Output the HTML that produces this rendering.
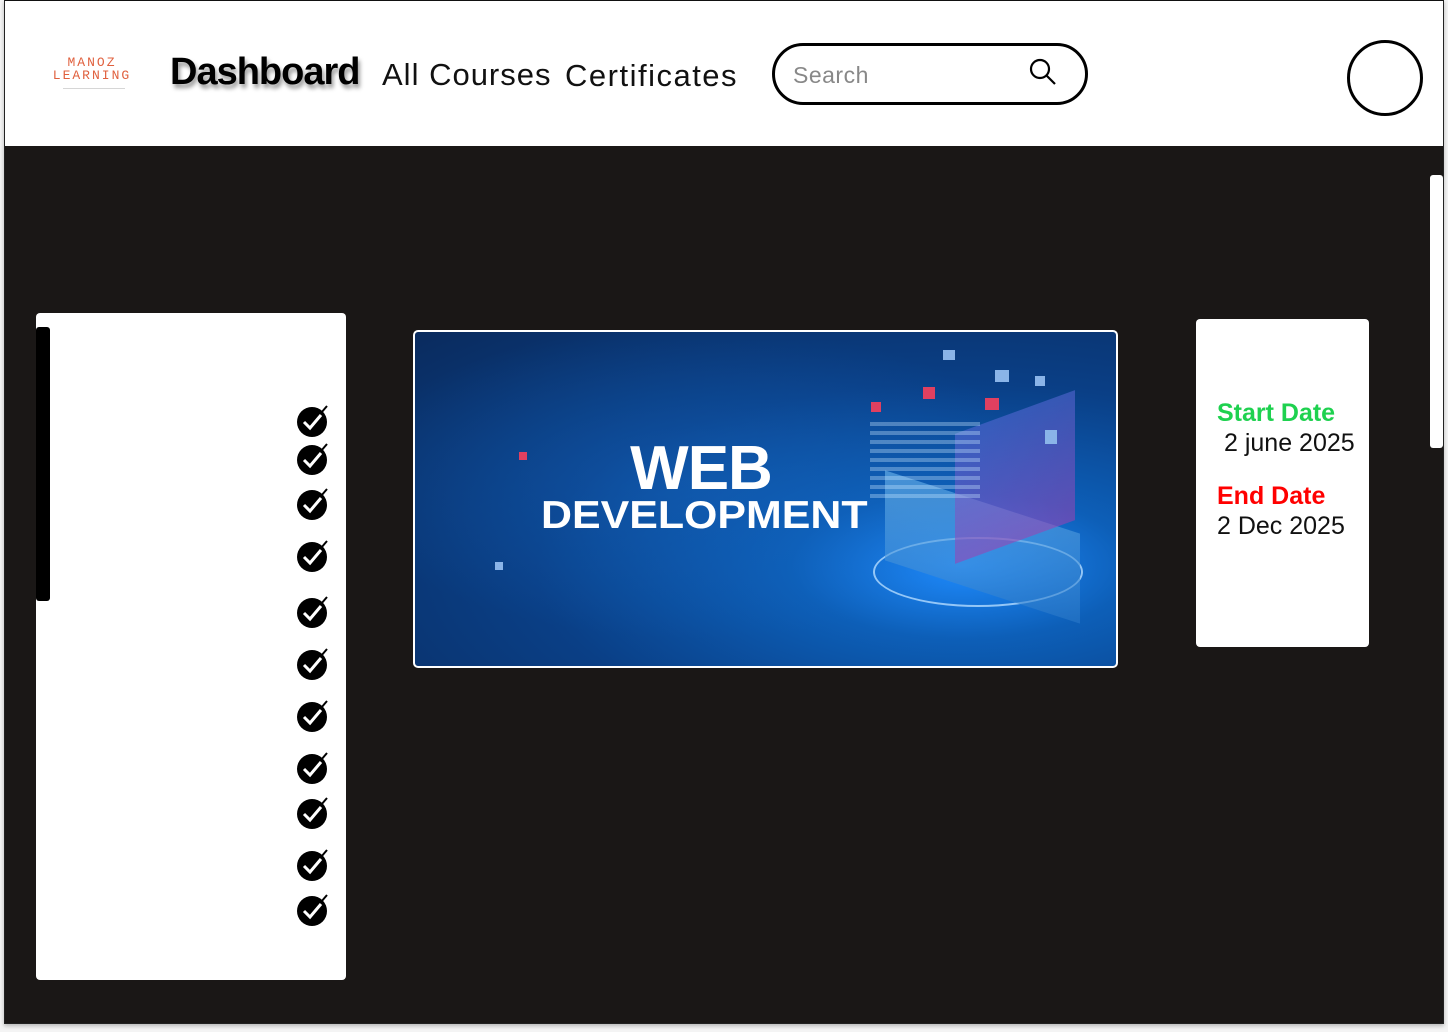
<!DOCTYPE html>
<html><head><meta charset="utf-8"><style>
*{margin:0;padding:0;box-sizing:border-box}
body{width:1448px;height:1032px;background:#f4f4f4;position:relative;overflow:hidden;font-family:"Liberation Sans",sans-serif}
.frame{position:absolute;left:4px;top:0;width:1440px;height:1024px;border:1px solid #222;border-top:1px solid #111;background:#1a1716;box-shadow:0 2px 4px rgba(0,0,0,.25)}
.hdr{position:absolute;left:0;top:0;width:1438px;height:145px;background:#fff}
.abs{position:absolute}
.card{background:#fff;border-radius:4px}
.chk{position:absolute;left:296px;width:32px;height:32px}
</style></head><body>
<div class="frame">
 <div class="hdr">
  <div class="abs" style="left:44px;top:55px;width:86px;text-align:center;color:#e0603e;font-family:'Liberation Mono',monospace;font-size:13px;line-height:13px;letter-spacing:2px">MANOZ<br>LEARNING</div>
  <div class="abs" style="left:58px;top:87px;width:62px;height:1px;background:#bbb;opacity:.6"></div>
  <div class="abs" style="left:165px;top:50px;font-size:38px;font-weight:bold;letter-spacing:-1px;color:#000;text-shadow:2px 4px 4px rgba(0,0,0,.4)">Dashboard</div>
  <div class="abs" style="left:377px;top:56px;font-size:31px;color:#111;letter-spacing:1px">All Courses</div>
  <div class="abs" style="left:560px;top:57px;font-size:31px;color:#111;letter-spacing:1.5px">Certificates</div>
  <div class="abs" style="left:767px;top:42px;width:316px;height:62px;border:3px solid #000;border-radius:31px"></div>
  <div class="abs" style="left:788px;top:61px;font-size:23px;color:#888;letter-spacing:.5px">Search</div>
  <svg class="abs" style="left:1023px;top:56px" width="30" height="30" viewBox="0 0 30 30"><circle cx="12" cy="12" r="9" fill="none" stroke="#000" stroke-width="2.2"/><line x1="18.5" y1="18.5" x2="27" y2="27" stroke="#000" stroke-width="2.2"/></svg>
  <div class="abs" style="left:1342px;top:39px;width:76px;height:76px;border:3px solid #000;border-radius:50%"></div>
 </div>
 <div class="abs" style="left:1425px;top:174px;width:13px;height:273px;background:#fff;border-radius:3px"></div>

 <div class="abs card" style="left:31px;top:312px;width:310px;height:667px"></div>
 <div class="abs" style="left:31px;top:326px;width:14px;height:274px;background:#000;border-radius:3px"></div>

 <div class="abs" style="left:408px;top:329px;width:705px;height:338px;border:2px solid #fff;border-radius:5px;overflow:hidden;background:radial-gradient(ellipse at 78% 70%,#1f8cff 0%,#0d5fb8 22%,#0a3f86 55%,#0a2b5e 100%)">
   <div class="abs" style="left:0;top:0;width:100%;height:100%;background:radial-gradient(ellipse at 40% 45%,rgba(20,100,190,.5),rgba(0,0,0,0) 60%)"></div>
   <div class="abs" style="left:458px;top:205px;width:210px;height:70px;border:2px solid rgba(180,220,255,.8);border-radius:50%"></div>
   <div class="abs" style="left:470px;top:170px;width:195px;height:90px;background:linear-gradient(160deg,#6fb8ee,#2a78c8);transform:skewY(18deg);opacity:.6"></div>
   <div class="abs" style="left:540px;top:80px;width:120px;height:130px;background:linear-gradient(180deg,#5a6ad8,#a03fb0);transform:skewY(-20deg);opacity:.55"></div>
   <div class="abs" style="left:455px;top:90px;width:110px;height:80px;background:repeating-linear-gradient(180deg,rgba(200,230,255,.7) 0 4px,rgba(0,0,0,0) 4px 9px);opacity:.5"></div>
   <div class="abs" style="left:528px;top:18px;width:12px;height:10px;background:#8ab4e8"></div>
   <div class="abs" style="left:580px;top:38px;width:14px;height:12px;background:#8ab4e8"></div>
   <div class="abs" style="left:620px;top:44px;width:10px;height:10px;background:#8ab4e8"></div>
   <div class="abs" style="left:508px;top:55px;width:12px;height:12px;background:#e04060"></div>
   <div class="abs" style="left:570px;top:66px;width:14px;height:12px;background:#e04060"></div>
   <div class="abs" style="left:456px;top:70px;width:10px;height:10px;background:#e04060"></div>
   <div class="abs" style="left:630px;top:98px;width:12px;height:14px;background:#8ab4e8"></div>
   <div class="abs" style="left:104px;top:120px;width:8px;height:8px;background:#e04060"></div>
   <div class="abs" style="left:80px;top:230px;width:8px;height:8px;background:#8ab4e8"></div>
   <div class="abs" style="left:211px;top:106px;width:150px;text-align:center;color:#fff;font-weight:bold;font-size:62px;line-height:62px;letter-spacing:-1px">WEB</div>
   <div class="abs" style="left:126px;top:164px;width:320px;color:#fff;font-weight:bold;font-size:39px;line-height:40px;white-space:nowrap;transform-origin:0 0;transform:scaleX(1.1)">DEVELOPMENT</div>
 </div>

 <div class="abs card" style="left:1191px;top:318px;width:173px;height:328px"></div>
 <div class="abs" style="left:1212px;top:398px;color:#1ed14f;font-weight:bold;font-size:25px">Start Date</div>
 <div class="abs" style="left:1219px;top:428px;color:#111;font-size:25px">2 june 2025</div>
 <div class="abs" style="left:1212px;top:481px;color:#f00;font-weight:bold;font-size:25px">End Date</div>
 <div class="abs" style="left:1212px;top:511px;color:#111;font-size:25px">2 Dec 2025</div>
</div>

<svg width="0" height="0" style="position:absolute"><defs><symbol id="ck" viewBox="0 0 32 32"><circle cx="16" cy="17" r="15" fill="#000"/><path d="M8 17 L14 23 L25 10" fill="none" stroke="#fff" stroke-width="3"/><path d="M25 8 L31 1" stroke="#000" stroke-width="2"/></symbol></defs></svg>
<svg class="chk" style="top:405px"><use href="#ck"/></svg>
<svg class="chk" style="top:443px"><use href="#ck"/></svg>
<svg class="chk" style="top:488px"><use href="#ck"/></svg>
<svg class="chk" style="top:540px"><use href="#ck"/></svg>
<svg class="chk" style="top:596px"><use href="#ck"/></svg>
<svg class="chk" style="top:648px"><use href="#ck"/></svg>
<svg class="chk" style="top:700px"><use href="#ck"/></svg>
<svg class="chk" style="top:752px"><use href="#ck"/></svg>
<svg class="chk" style="top:797px"><use href="#ck"/></svg>
<svg class="chk" style="top:849px"><use href="#ck"/></svg>
<svg class="chk" style="top:894px"><use href="#ck"/></svg>
</body></html>
